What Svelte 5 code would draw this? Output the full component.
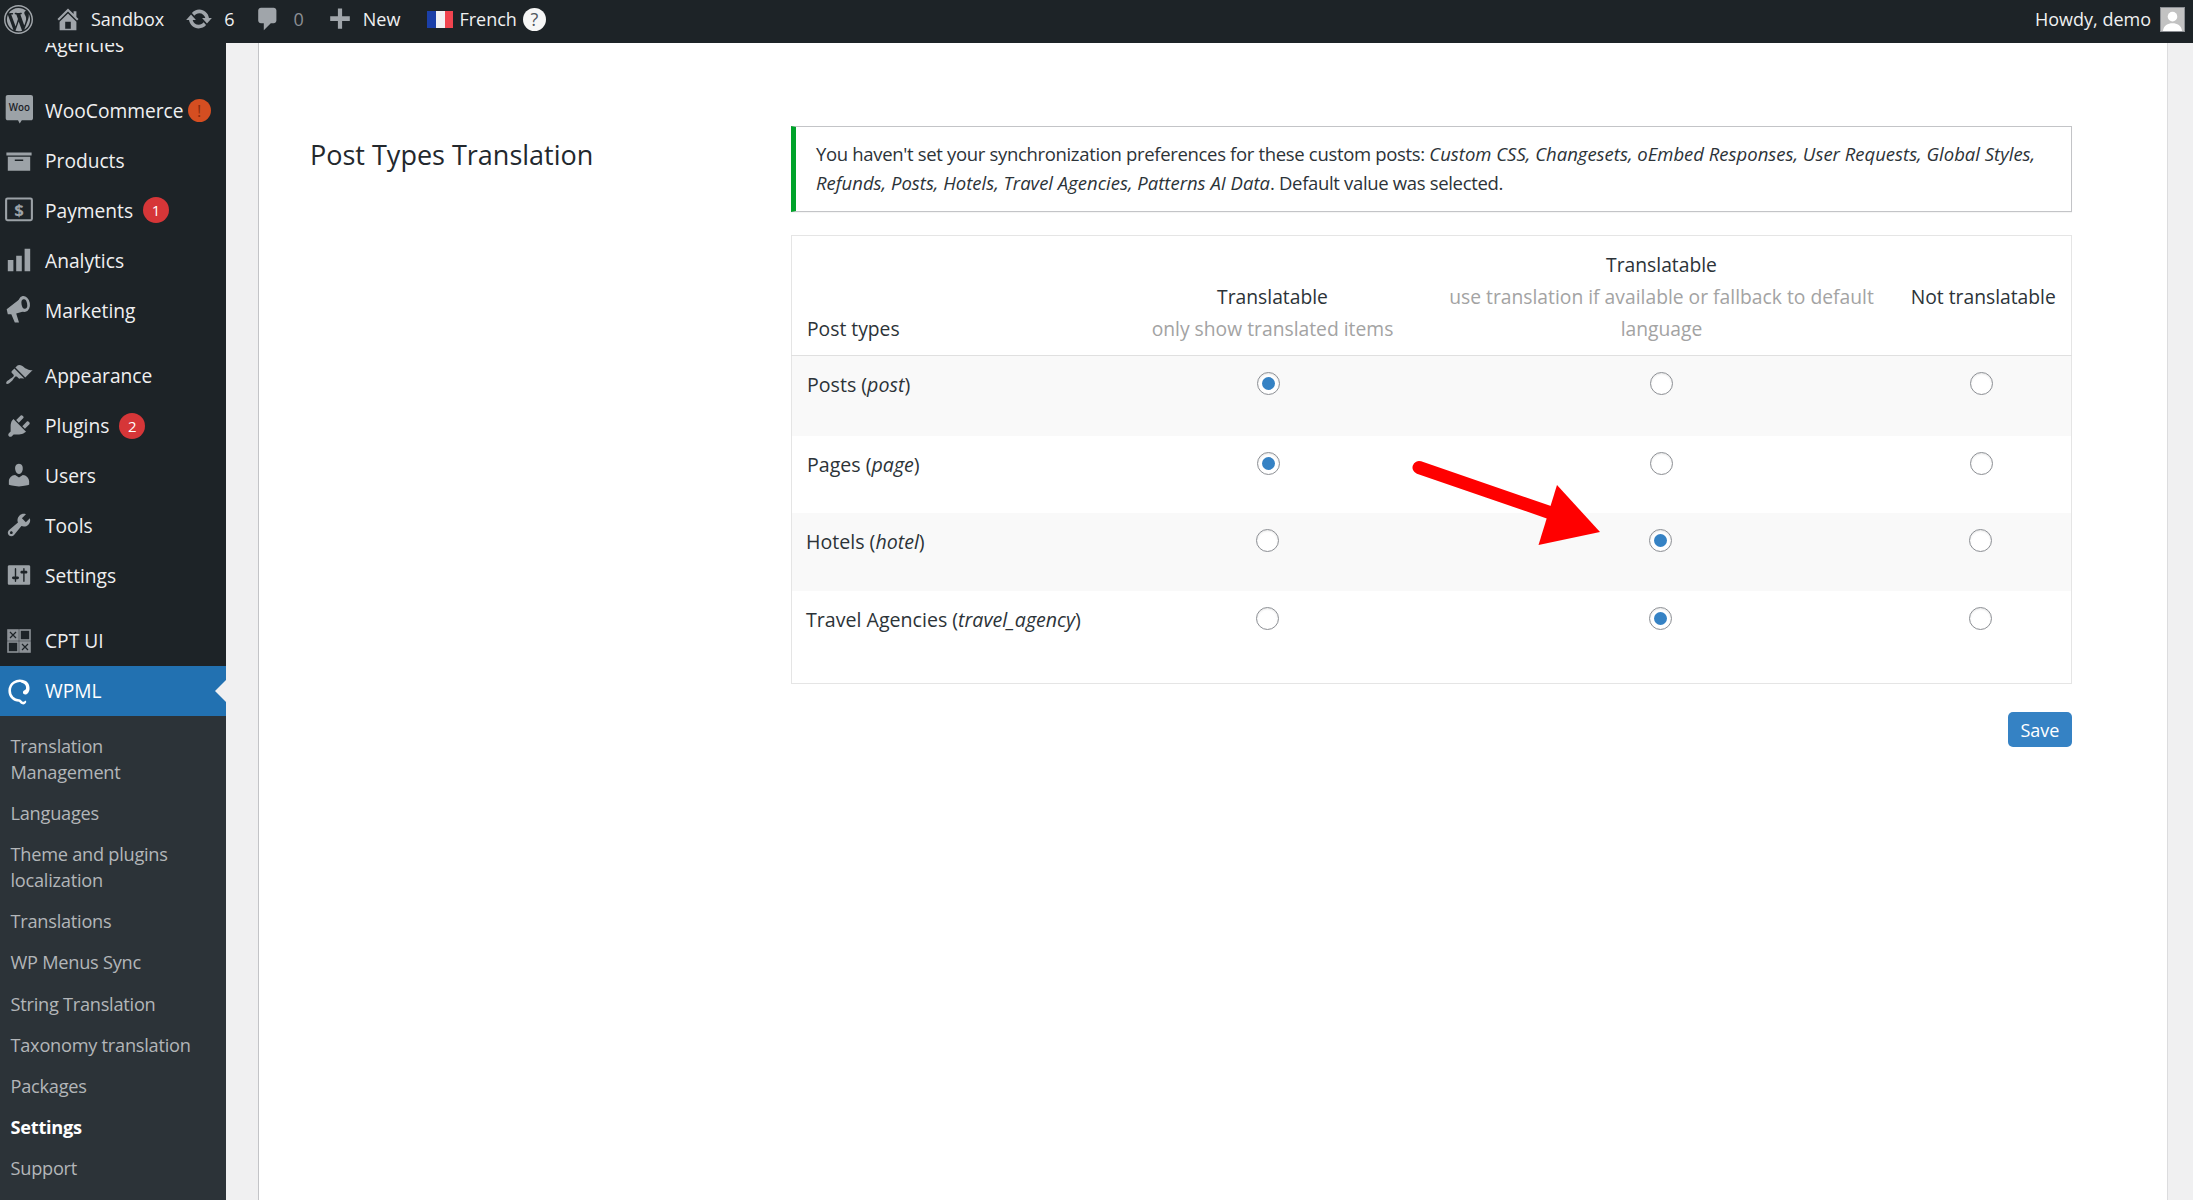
<script>
	const icons = {
		archive: 'M19 4v2H1V4h18zM2 7h16v10H2V7zm11 3V9H7v1h6z',
		chart: 'M18 18V2h-4v16h4zm-6 0V7H8v11h4zm-6 0v-8H2v8h4z',
		appearance:
			'M14.48 11.06L7.41 3.99l1.5-1.5c.5-.56 2.3-.47 3.51.32 1.21.8 1.43 1.28 2.91 2.1 1.18.64 2.45 1.26 4.45.85zm-.71.71L6.7 4.7 4.93 6.47c-.39.39-.39 1.02 0 1.41l1.06 1.06c.39.39.39 1.03 0 1.42-.6.6-1.43 1.11-2.21 1.69-.35.26-.7.53-1.01.84C1.43 13.23.4 14.84 1.06 15.5c.66.66 2.27-.37 3.61-1.71.31-.31.58-.66.84-1.01.58-.78 1.09-1.61 1.69-2.21.39-.39 1.02-.39 1.41 0l1.06 1.06c.39.39 1.02.39 1.41 0z',
		plugins:
			'M13.11 4.36L9.87 7.6 8 5.73l3.24-3.24c.35-.34 1.05-.2 1.56.32.52.51.66 1.21.31 1.55zm-8 1.77l.91-1.12 9.01 9.01-1.19.84c-.71.71-2.63 1.16-3.82 1.16H6.14L4.9 17.26c-.59.59-1.54.59-2.12 0-.59-.58-.59-1.53 0-2.12l1.24-1.24v-3.88c0-1.13.4-3.19 1.09-3.89zm7.26 3.97l3.24-3.24c.34-.35 1.04-.21 1.55.31.52.51.66 1.21.31 1.55l-3.24 3.25z',
		users:
			'M10 9.25c-2.27 0-2.73-3.44-2.73-3.44C7 4.02 7.82 2 9.97 2c2.16 0 2.98 2.02 2.71 3.81 0 0-.41 3.44-2.68 3.44zm0 2.57L12.72 10c2.39 0 4.52 2.33 4.52 4.53v2.49s-3.65 1.13-7.24 1.13c-3.65 0-7.24-1.13-7.24-1.13v-2.49c0-2.25 1.94-4.48 4.47-4.48z',
		tools:
			'M16.68 9.77c-1.34 1.34-3.3 1.67-4.95.99l-5.41 6.52c-.99.99-2.59.99-3.58 0s-.99-2.59 0-3.57l6.52-5.42c-.68-1.65-.35-3.61.99-4.95 1.28-1.28 3.12-1.62 4.72-1.06l-2.89 2.89 2.82 2.82 2.86-2.87c.53 1.58.18 3.39-1.08 4.65zM3.81 16.21c.4.39 1.04.39 1.43 0 .4-.4.4-1.04 0-1.43-.39-.4-1.03-.4-1.43 0-.39.39-.39 1.03 0 1.43z',
		settings:
			'M18 16V4c0-.55-.45-1-1-1H3c-.55 0-1 .45-1 1v12c0 .55.45 1 1 1h14c.55 0 1-.45 1-1zM8 11h1c.55 0 1 .45 1 1s-.45 1-1 1H8v1.5c0 .28-.22.5-.5.5s-.5-.22-.5-.5V13H6c-.55 0-1-.45-1-1s.45-1 1-1h1V5.5c0-.28.22-.5.5-.5s.5.22.5.5V11zm5-2h-1c-.55 0-1-.45-1-1s.45-1 1-1h1V5.5c0-.28.22-.5.5-.5s.5.22.5.5V7h1c.55 0 1 .45 1 1s-.45 1-1 1h-1v5.5c0 .28-.22.5-.5.5s-.5-.22-.5-.5V9z'
	};

	const menuTop = [
		{ key: 'woo', label: 'WooCommerce', badge: '!', badgeClass: 'warn' },
		{ key: 'archive', label: 'Products' },
		{ key: 'pay', label: 'Payments', badge: '1' },
		{ key: 'chart', label: 'Analytics' },
		{ key: 'mega', label: 'Marketing' }
	];
	const menuMid = [
		{ key: 'appearance', label: 'Appearance' },
		{ key: 'plugins', label: 'Plugins', badge: '2' },
		{ key: 'users', label: 'Users' },
		{ key: 'tools', label: 'Tools' },
		{ key: 'settings', label: 'Settings' }
	];
	const submenu = [
		'Translation Management',
		'Languages',
		'Theme and plugins localization',
		'Translations',
		'WP Menus Sync',
		'String Translation',
		'Taxonomy translation',
		'Packages',
		'Settings',
		'Support'
	];

	// choice: 0 only translated, 1 with fallback, 2 not translatable
	const rows = [
		{ name: 'Posts', slug: 'post', choice: 0, h: 80 },
		{ name: 'Pages', slug: 'page', choice: 0, h: 77 },
		{ name: 'Hotels', slug: 'hotel', choice: 1, h: 78 },
		{ name: 'Travel Agencies', slug: 'travel_agency', choice: 1, h: 93 }
	];
</script>

{#snippet menuIcon(key)}
	<svg class="icon" viewBox="0 0 20 20" aria-hidden="true">
		{#if key === 'woo'}
			<path d="M2 -1.400h16.500c.9 0 1.500.6 1.500 1.500v15c0 .9-.6 1.500-1.500 1.500H12L10.500 19l-1.200-2.400H2c-.9 0-1.500-.6-1.500-1.500V.100c0-.9.6-1.500 1.500-1.500z" />
			<text class="woo-text" x="10.200" y="10" text-anchor="middle">Woo</text>
		{:else if key === 'pay'}
			<rect x="0.800" y="1.800" width="18.400" height="15.500" rx="1" class="outline" />
			<text class="pay-text" x="10" y="14.300" text-anchor="middle">$</text>
		{:else if key === 'mega'}
			<path d="M1.200 9.500L12 1l3 9.500-7 2 2 6.500H7L4.500 13 2 13z" />
			<ellipse cx="13.600" cy="5.700" rx="4.200" ry="5.700" transform="rotate(-10 13.600 5.700)" />
			<ellipse class="hole" cx="13.800" cy="5.700" rx="2" ry="3.400" transform="rotate(-10 13.800 5.700)" />
		{:else}
			<path d={icons[key]} />
		{/if}
	</svg>
{/snippet}

{#snippet menuRow(item)}
	<li class="item">
		{@render menuIcon(item.key)}
		<span class="label">{item.label}</span>
		{#if item.badge}
			<span class="badge {item.badgeClass ?? ''}">{item.badge}</span>
		{/if}
	</li>
{/snippet}

<header class="topbar">
	<div class="bar-left">
		<svg class="wp" viewBox="0 0 20 20" aria-hidden="true">
			<path d="M20 10c0-5.520-4.480-10-10-10S0 4.480 0 10s4.480 10 10 10 10-4.480 10-10zM10 1.010c4.970 0 8.990 4.020 8.990 8.990s-4.020 8.990-8.990 8.990S1.010 14.970 1.010 10 5.030 1.010 10 1.010zM8.010 14.820L4.960 6.610c.49-.03 1.050-.08 1.050-.08.43-.05.38-1.010-.06-.99 0 0-1.290.1-2.130.1-.15 0-.33 0-.52-.01 1.440-2.170 3.900-3.600 6.700-3.600 2.090 0 3.990.79 5.410 2.090-.6-.08-1.450.35-1.450 1.420 0 .66.38 1.220.79 1.880.31.54.5 1.220.5 2.210 0 1.340-1.270 4.480-1.270 4.480l-2.710-7.500c.48-.03.75-.16.75-.16.43-.04.38-1.100-.05-1.080 0 0-1.300.11-2.140.11-.78 0-2.110-.11-2.110-.11-.43-.02-.48 1.060-.05 1.080l.84.08 1.120 3.040zm6.020 2.150L16.640 10s.67-1.690.39-3.810c.63 1.140.94 2.420.94 3.810 0 2.960-1.560 5.580-3.940 6.970zM2.680 6.770L6.500 17.250c-2.670-1.300-4.470-4.080-4.470-7.250 0-1.160.2-2.230.65-3.230zm7.450 4.530l2.290 6.250c.02.05.03.1.05.13-.78.27-1.600.42-2.470.42-.73 0-1.450-.11-2.100-.3z" />
		</svg>
		<span class="bar-item home">
			<svg viewBox="0 0 20 20" aria-hidden="true"><path d="M16 8.500l1.530 1.530-1.060 1.060L10 4.620l-6.470 6.470-1.060-1.060L10 2.500l4 4v-2h2v4zm-6-2.460l6 5.990V18H4v-5.970zM12 17v-5H8v5h4z" /></svg>
			Sandbox
		</span>
		<span class="bar-item updates">
			<svg viewBox="0 0 20 20" aria-hidden="true"><path d="M10.200 3.280c3.530 0 6.430 2.610 6.920 6h2.080l-3.500 4-3.500-4h2.320c-.45-1.970-2.210-3.450-4.320-3.450-1.450 0-2.730.71-3.540 1.780L4.950 5.660C6.230 4.200 8.110 3.280 10.200 3.280zm-.4 13.440c-3.520 0-6.430-2.610-6.920-6H.8l3.500-4c1.170 1.330 2.330 2.670 3.500 4H5.480c.45 1.970 2.210 3.450 4.320 3.450 1.450 0 2.730-.71 3.540-1.780l1.710 1.950c-1.280 1.460-3.150 2.380-5.250 2.380z" /></svg>
			6
		</span>
		<span class="bar-item comments">
			<svg viewBox="0 0 20 20" aria-hidden="true"><path d="M5 2h9c1.100 0 2 .9 2 2v7c0 1.100-.9 2-2 2h-2l-5 5v-5H5c-1.100 0-2-.9-2-2V4c0-1.100.9-2 2-2z" /></svg>
			<span class="dim">0</span>
		</span>
		<span class="bar-item new">
			<svg viewBox="0 0 20 20" aria-hidden="true"><path d="M17 8v3.500h-5.500V17H8.500v-5.500H3V8h5.500V2.500h3V8H17z" /></svg>
			New
		</span>
		<span class="bar-item lang">
			<span class="flag"><i></i><i></i><i></i></span>
			French
			<span class="help">?</span>
		</span>
	</div>
	<div class="howdy">
		Howdy, demo
		<span class="avatar">
			<svg viewBox="0 0 24 24" aria-hidden="true"><circle cx="12" cy="9" r="5" /><path d="M2 24c1-6 5-8 10-8s9 2 10 8z" /></svg>
		</span>
	</div>
</header>

<div class="layout">
	<aside class="sidebar">
		<div class="cut-off">Agencies</div>
		<ul class="menu">
			{#each menuTop as item}
				{@render menuRow(item)}
			{/each}
		</ul>
		<ul class="menu">
			{#each menuMid as item}
				{@render menuRow(item)}
			{/each}
		</ul>
		<ul class="menu">
			<li class="item">
				<svg class="icon" viewBox="-2 -2 28 28" aria-hidden="true">
					<g class="cpt">
						<rect x="1" y="1" width="10" height="10" class="tile" />
						<path d="M3 3l6 6M9 3l-6 6" />
						<rect x="13" y="1" width="10" height="10" />
						<rect x="1" y="13" width="10" height="10" />
						<rect x="13" y="13" width="10" height="10" class="tile" />
						<path d="M15 15l6 6M21 15l-6 6" />
					</g>
				</svg>
				<span class="label">CPT UI</span>
			</li>
			<li class="item active">
				<svg class="icon" viewBox="0 0 24 24" aria-hidden="true">
					<path class="swirl" d="M15.500 3.600C10 2 4 5.500 4 11.700c0 4.800 3.500 8.500 8 8.500 1 0 1.500 1.300 2.800 2 1.300.6 2.700-.4 2.200-1.500" />
					<path d="M14 2.500c4.500-.3 7.500 3.300 7 8-.3 2.300-1.700 4.500-3.500 4.500-1.500 0-2.500-1.200-2-2.600.5-1.300 2-1 2.500-2.400.5-2.400-1.300-4.700-4-5z" />
				</svg>
				<span class="label">WPML</span>
			</li>
		</ul>
		<ul class="sub">
			{#each submenu as name}
				<li class:current={name === 'Settings'}>{name}</li>
			{/each}
		</ul>
	</aside>

	<main class="gutter">
		<div class="panel">
			<h2>Post Types Translation</h2>
			<section class="form">
				<div class="notice">
					You haven't set your synchronization preferences for these custom posts:
					<em>Custom CSS, Changesets, oEmbed Responses, User Requests, Global Styles, Refunds, Posts, Hotels, Travel Agencies, Patterns AI Data</em>.
					Default value was selected.
				</div>

				<table>
					<thead>
						<tr>
							<th class="first">Post types</th>
							<th class="c1">Translatable<small>only show translated items</small></th>
							<th class="c2">Translatable<small>use translation if available or fallback to default language</small></th>
							<th class="c3">Not translatable</th>
						</tr>
					</thead>
					<tbody>
						{#each rows as row, r}
							<tr class:moved={r > 1} style="height: {row.h}px">
								<td class="first">{row.name} (<em>{row.slug}</em>)</td>
								{#each [0, 1, 2] as col}
									<td class="c{col + 1}">
										<input type="radio" name={row.slug} checked={row.choice === col} />
									</td>
								{/each}
							</tr>
						{/each}
					</tbody>
				</table>

				<div class="actions">
					<button type="button">Save</button>
				</div>
			</section>
		</div>
	</main>
</div>

<svg class="arrow" viewBox="0 0 200 95" aria-hidden="true">
	<path d="M9 7.500L141 53" class="shaft" />
	<path d="M147 25L190 72 128.500 85z" fill="#ff0000" />
</svg>

<style>
	:global(body) {
		margin: 0;
		background: #f0f0f1;
		font-family: 'Open Sans', 'Noto Sans', sans-serif;
		color: #2c3338;
	}

	.topbar {
		height: 43px;
		background: #1d2327;
		color: #f0f0f1;
		display: flex;
		align-items: center;
		justify-content: space-between;
		font-size: 18px;
		padding-bottom: 5px;
		box-sizing: border-box;
	}

	.bar-left {
		display: flex;
		align-items: center;
	}

	.topbar svg {
		fill: #a0a5aa;
	}

	.wp {
		width: 29px;
		height: 29px;
		margin-left: 4px;
	}

	.bar-item {
		display: flex;
		align-items: center;
	}

	.bar-item svg {
		width: 28px;
		height: 28px;
	}

	.home {
		margin-left: 21px;
		gap: 9px;
	}

	.updates {
		margin-left: 21px;
		gap: 11px;
	}

	.comments {
		margin-left: 20px;
		gap: 11px;
	}

	.dim {
		color: #8c8f94;
	}

	.new {
		margin-left: 22px;
		gap: 9px;
	}

	.lang {
		margin-left: 27px;
		gap: 6px;
	}

	.flag {
		display: flex;
		width: 26px;
		height: 17px;
	}

	.flag i {
		flex: 1;
		background: #f1f1f4;
	}

	.flag i:first-child {
		background: #1b3fa8;
	}

	.flag i:last-child {
		background: #f0444f;
	}

	.help {
		width: 23px;
		height: 23px;
		border-radius: 50%;
		background: #f6f6f6;
		color: #50575e;
		font-size: 18px;
		display: flex;
		align-items: center;
		justify-content: center;
	}

	.howdy {
		display: flex;
		align-items: center;
		gap: 9px;
		margin-right: 8px;
	}

	.avatar {
		width: 25px;
		height: 25px;
		box-sizing: border-box;
		border: 1px solid #8c8f94;
		background: #c2c2c2;
		display: block;
		overflow: hidden;
	}

	.avatar svg {
		display: block;
		width: 100%;
		height: 100%;
		fill: #fff;
	}

	.layout {
		display: flex;
		height: 1157px;
		overflow: hidden;
	}

	.sidebar {
		width: 226px;
		flex: none;
		background: #1d2327;
		color: #f0f0f1;
		overflow: hidden;
		font-size: 19.200px;
	}

	.cut-off {
		margin-top: -11px;
		padding: 0 0 28px 45px;
		line-height: 26px;
		height: 26px;
	}

	ul {
		list-style: none;
		margin: 0;
		padding: 0;
	}

	.menu + .menu {
		margin-top: 16px;
	}

	.item {
		height: 49.800px;
		display: flex;
		align-items: center;
		padding-left: 5px;
		position: relative;
	}

	.label {
		margin-left: 12px;
	}

	.icon {
		width: 28px;
		height: 28px;
		flex: none;
		fill: #9ca2a7;
		overflow: visible;
	}

	.outline {
		fill: none;
		stroke: #9ca2a7;
		stroke-width: 1.500;
	}

	.woo-text {
		fill: #1d2327;
		font-size: 7px;
		font-weight: 600;
	}

	.pay-text {
		fill: #9ca2a7;
		font-size: 12px;
		font-weight: 700;
	}

	.hole {
		fill: #1d2327;
	}

	.cpt rect {
		fill: none;
		stroke: #8c9196;
		stroke-width: 1.600;
	}

	.cpt rect.tile {
		fill: #8c9196;
	}

	.cpt path {
		stroke: #1d2327;
		stroke-width: 1.200;
		fill: none;
	}

	.badge {
		width: 26px;
		height: 26px;
		border-radius: 50%;
		background: #d63638;
		color: #fff;
		font-size: 15px;
		display: flex;
		align-items: center;
		justify-content: center;
		margin-left: 10px;
	}

	.badge.warn {
		width: 23px;
		height: 23px;
		margin-left: 4px;
		background: #d54e21;
		color: #8a2a0c;
		font-size: 16px;
	}

	.active {
		background: #2271b1;
		color: #fff;
	}

	.active .icon {
		fill: #fff;
	}

	.swirl {
		fill: none;
		stroke: #fff;
		stroke-width: 2.200;
	}

	.active::after {
		content: '';
		position: absolute;
		right: 0;
		top: 14px;
		border: 11.500px solid transparent;
		border-right-color: #f0f0f1;
		border-left: 0;
	}

	.sub {
		background: #2c3338;
		padding: 17px 20px 30px 10.500px;
		font-size: 18.200px;
		letter-spacing: -0.25px;
		line-height: 26px;
		color: #b3b6b9;
	}

	.sub li + li {
		margin-top: 15.200px;
	}

	.sub .current {
		color: #fff;
		font-weight: 700;
	}

	.gutter {
		flex: 1;
		padding: 0 25px 0 32px;
		min-width: 0;
	}

	.panel {
		height: 100%;
		background: #fff;
		border-left: 1px solid #c3c4c7;
		border-right: 1px solid #dcdcde;
		display: flex;
		padding: 83px 0 0 51px;
		box-sizing: border-box;
		font-size: 18.500px;
	}

	h2 {
		width: 481px;
		flex: none;
		margin: 0;
		font-size: 27px;
		line-height: 58px;
		font-weight: 400;
		color: #23282d;
	}

	.form {
		width: 1281px;
	}

	.notice {
		box-sizing: border-box;
		height: 86px;
		border: 1px solid #c3c4c7;
		border-left: 5px solid #00a32a;
		box-shadow: 0 1px 1px rgba(0, 0, 0, 0.04);
		padding: 13px 10px 0 20px;
		line-height: 28.600px;
		color: #2c3338;
		letter-spacing: -0.33px;
	}

	.notice em {
		letter-spacing: 0;
	}

	table {
		width: 100%;
		margin-top: 23px;
		border-collapse: collapse;
		table-layout: fixed;
		border: 1px solid #e5e5e5;
		font-size: 19.300px;
	}

	th {
		font-weight: 400;
		text-align: center;
		vertical-align: bottom;
		line-height: 32px;
		padding: 13px 16px 10px;
		border-bottom: 1px solid #e0e0e0;
		color: #2c3338;
	}

	small {
		display: block;
		font-size: inherit;
		color: #a3a3a3;
	}

	td {
		vertical-align: top;
		padding: 15px 16px 0;
		line-height: 32px;
		text-align: center;
	}

	th.first,
	td.first {
		width: 326px;
		text-align: left;
		box-sizing: border-box;
		padding-left: 15px;
	}

	td.first {
		font-size: 19.600px;
		padding-top: 13px;
	}

	.c1 {
		width: 304px;
		box-sizing: border-box;
	}

	.c2 {
		width: 474px;
		box-sizing: border-box;
	}

	.c3 {
		box-sizing: border-box;
	}

	th.c3 {
		white-space: nowrap;
		padding-left: 0;
		padding-right: 0;
		vertical-align: middle;
	}

	th.c1,
	th.c2 {
		padding-left: 22px;
	}

	td.c1 {
		padding-right: 18px;
	}

	td.c2 {
		padding-left: 22px;
	}

	td.c3 {
		padding-right: 20px;
	}

	tbody tr:nth-child(odd) {
		background: #f9f9f9;
	}

	.moved td.first {
		padding-left: 14px;
	}

	.moved input {
		margin-left: calc(50% - 12.500px);
	}

	input {
		appearance: none;
		display: block;
		width: 23px;
		height: 23px;
		margin: 1px auto 0;
		background: #fff;
		border: 1px solid #8c8f94;
		border-radius: 50%;
		box-shadow: inset 0 1px 2px rgba(0, 0, 0, 0.1);
		box-sizing: border-box;
		position: relative;
	}

	input:checked::before {
		content: '';
		position: absolute;
		inset: 4px;
		border-radius: 50%;
		background: #3582c4;
	}

	.actions {
		display: flex;
		justify-content: flex-end;
		margin-top: 28px;
	}

	button {
		width: 64px;
		height: 35px;
		border: 0;
		border-radius: 5px;
		background: #3582c4;
		color: #fff;
		font: inherit;
		font-size: 18px;
		padding: 0;
	}

	.arrow {
		position: absolute;
		left: 1410px;
		top: 460px;
		width: 200px;
		height: 95px;
	}

	.shaft {
		stroke: #ff0000;
		stroke-width: 13px;
		stroke-linecap: round;
		fill: none;
	}
</style>
